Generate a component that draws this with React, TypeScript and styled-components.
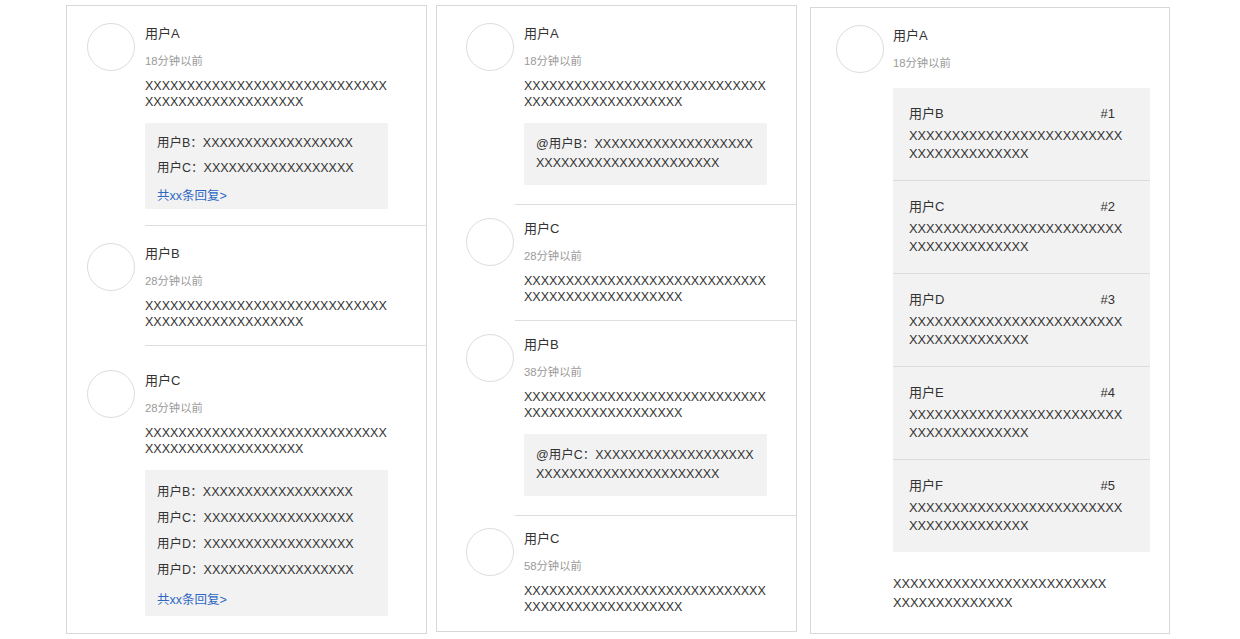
import React from "react";
import styled, { createGlobalStyle } from "styled-components";

const GlobalStyle = createGlobalStyle`
  html, body { margin: 0; padding: 0; background: #ffffff; }
  body {
    font-family: "Liberation Sans", "Noto Sans CJK SC", sans-serif;
    color: #333333;
  }
  * { box-sizing: border-box; }
`;

const Page = styled.main`
  display: flex;
  align-items: flex-start;
  padding: 5px 0 0 66px;
`;

const Panel = styled.section<{ $gap?: number; $offset?: number; $width?: number }>`
  width: ${(p) => p.$width ?? 361}px;
  margin-left: ${(p) => p.$gap ?? 0}px;
  margin-top: ${(p) => p.$offset ?? 0}px;
  border: 1px solid #d8d8d8;
  background: #ffffff;
  display: flex;
  flex-direction: column;
`;

const Item = styled.article<{ $indent: number }>`
  display: flex;
  align-items: flex-start;
  padding-left: ${(p) => p.$indent}px;
`;

const Avatar = styled.div<{ $top: number }>`
  flex-shrink: 0;
  width: 48px;
  height: 48px;
  margin-top: ${(p) => p.$top}px;
  border-radius: 50%;
  border: 1px solid #dddddd;
  background: #ffffff;
`;

const Body = styled.div<{ $top: number; $gap: number; $inset: number; $divider: boolean; $bottom?: number }>`
  flex: 1;
  min-width: 0;
  margin-left: ${(p) => p.$gap}px;
  padding: ${(p) => p.$top}px 0 ${(p) => p.$bottom ?? 15}px ${(p) => p.$inset}px;
  border-bottom: 1px solid ${(p) => (p.$divider ? "#dedede" : "transparent")};
`;

const Name = styled.div`
  font-size: 13px;
  line-height: 22px;
  color: #333333;
`;

const Time = styled.div`
  margin-top: 8px;
  font-size: 11.3px;
  line-height: 16px;
  color: #9a9a9a;
`;

const Content = styled.p`
  margin: 9px 0 0;
  max-width: 243px;
  font-size: 12.5px;
  line-height: 16px;
  color: #333333;
  word-break: break-all;
`;

const ThreadBox = styled.div<{ $roomy?: boolean }>`
  margin: 13px 0 1px;
  width: 243px;
  background: #f2f2f2;
  padding: ${(p) => (p.$roomy ? "9px 12px 3px" : "8px 12px 0")};
`;

const ThreadLine = styled.div<{ $lh: number }>`
  font-size: 12.5px;
  line-height: ${(p) => p.$lh}px;
  color: #333333;
  white-space: nowrap;
`;

const MoreLink = styled.a<{ $lh: number; $mt: number }>`
  display: block;
  margin-top: ${(p) => p.$mt}px;
  font-size: 12.5px;
  line-height: ${(p) => p.$lh}px;
  color: #2d67c3;
  text-decoration: none;
`;

const QuoteBox = styled.div`
  margin: 13px 0 4px;
  width: 243px;
  background: #f2f2f2;
  padding: 12px 12px;
  font-size: 12.5px;
  line-height: 19px;
  color: #333333;
  word-break: break-all;
`;

const SubList = styled.ol`
  list-style: none;
  margin: 17px 0 0;
  padding: 0;
  width: 257px;
  background: #f2f2f2;
`;

const SubItem = styled.li`
  padding: 15px 16px 17px;
  & + & {
    border-top: 1px solid #dcdcdc;
  }
`;

const SubHead = styled.div`
  display: flex;
  justify-content: space-between;
  padding-right: 19px;
  font-size: 13px;
  line-height: 22px;
  color: #333333;
`;

const SubText = styled.p`
  margin: 2px 0 0;
  max-width: 216px;
  font-size: 12.8px;
  line-height: 18px;
  color: #333333;
  word-break: break-all;
`;

const Tail = styled.p`
  margin: 22px 0 0;
  max-width: 216px;
  font-size: 12.8px;
  line-height: 19px;
  color: #333333;
  word-break: break-all;
`;

const X = (n: number) => "X".repeat(n);

type ThreadComment = {
  name: string;
  time: string;
  top: number;
  replies?: string[];
  roomy?: boolean;
};

const panelOne: ThreadComment[] = [
  { name: "用户A", time: "18分钟以前", top: 17, replies: ["用户B", "用户C"] },
  { name: "用户B", time: "28分钟以前", top: 17 },
  { name: "用户C", time: "28分钟以前", top: 24, replies: ["用户B", "用户C", "用户D", "用户D"], roomy: true },
];

type QuoteComment = { name: string; time: string; top: number; quote?: string };

const panelTwo: QuoteComment[] = [
  { name: "用户A", time: "18分钟以前", top: 17, quote: "@用户B：" },
  { name: "用户C", time: "28分钟以前", top: 13 },
  { name: "用户B", time: "38分钟以前", top: 13, quote: "@用户C：" },
  { name: "用户C", time: "58分钟以前", top: 12 },
];

const floors = ["用户B", "用户C", "用户D", "用户E", "用户F"];

export default function App() {
  return (
    <>
      <GlobalStyle />
      <Page>
        <Panel>
          {panelOne.map((c, i) => (
            <Item key={i} $indent={20}>
              <Avatar $top={c.top} />
              <Body $top={c.top} $gap={10} $inset={0} $divider={i < panelOne.length - 1}>
                <Name>{c.name}</Name>
                <Time>{c.time}</Time>
                <Content>{X(48)}</Content>
                {c.replies && (
                  <ThreadBox $roomy={c.roomy}>
                    {c.replies.map((r, j) => (
                      <ThreadLine key={j} $lh={c.roomy ? 26 : 25}>
                        {r}：{X(18)}
                      </ThreadLine>
                    ))}
                    <MoreLink href="#" $lh={c.roomy ? 26 : 25} $mt={c.roomy ? 4 : 3}>
                      共xx条回复&gt;
                    </MoreLink>
                  </ThreadBox>
                )}
              </Body>
            </Item>
          ))}
        </Panel>

        <Panel $gap={9}>
          {panelTwo.map((c, i) => (
            <Item key={i} $indent={29}>
              <Avatar $top={c.top} />
              <Body $top={c.top} $gap={1} $inset={9} $divider={i < panelTwo.length - 1}>
                <Name>{c.name}</Name>
                <Time>{c.time}</Time>
                <Content>{X(48)}</Content>
                {c.quote && (
                  <QuoteBox>
                    {c.quote}
                    {X(41)}
                  </QuoteBox>
                )}
              </Body>
            </Item>
          ))}
        </Panel>

        <Panel $gap={13} $offset={2} $width={360}>
          <Item $indent={25}>
            <Avatar $top={17} />
            <Body $top={17} $gap={9} $inset={0} $divider={false} $bottom={20}>
              <Name>用户A</Name>
              <Time>18分钟以前</Time>
              <SubList>
                {floors.map((f, i) => (
                  <SubItem key={f}>
                    <SubHead>
                      <span>{f}</span>
                      <span>#{i + 1}</span>
                    </SubHead>
                    <SubText>{X(39)}</SubText>
                  </SubItem>
                ))}
              </SubList>
              <Tail>{X(39)}</Tail>
            </Body>
          </Item>
        </Panel>
      </Page>
    </>
  );
}
